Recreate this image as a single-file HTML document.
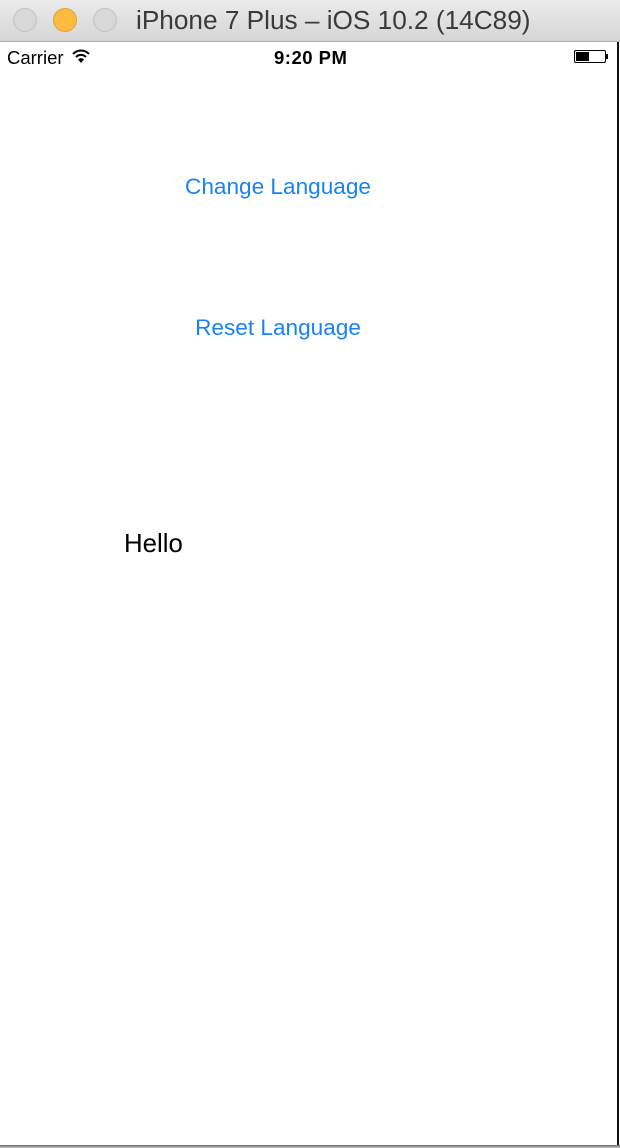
<!DOCTYPE html>
<html><head><style>
body{margin:0;width:620px;height:1148px;background:#fff;position:relative;overflow:hidden;font-family:"Liberation Sans",sans-serif}
.tb{position:absolute;left:0;top:0;width:620px;height:41px;background:linear-gradient(#ebebeb,#d6d6d6);border-bottom:1px solid #b0b0b0}
.dot{position:absolute;top:8px;width:24px;height:24px;border-radius:50%;background:#d8d8d8;border:1px solid #c2c2c2;box-sizing:border-box}
.title{position:absolute;left:136px;top:5px;font-size:26.2px;color:#3a3a3a}
.rb{position:absolute;right:1px;top:42px;width:2px;height:1104px;background:#111}
.bb{position:absolute;left:0;top:1145px;width:620px;height:3px;background:linear-gradient(#666,#ccc)}
.s{position:absolute;font-size:18.5px;color:#000}
.btn{position:absolute;font-size:22.6px;color:#1a82f7;width:556px;text-align:center;left:0}
</style></head><body>
<div class="tb">
<div class="dot" style="left:13px"></div>
<div class="dot" style="left:53px;background:#fdbc40;border-color:#dea236"></div>
<div class="dot" style="left:93px"></div>
<div class="title">iPhone 7 Plus – iOS 10.2 (14C89)</div>
</div>
<div class="s" style="left:7px;top:47px">Carrier</div>
<svg style="position:absolute;left:72px;top:49px" width="18" height="14" viewBox="0 0 18 14"><path d="M1 5a11 11 0 0 1 16 0M4 8a7 7 0 0 1 10 0" stroke="#000" stroke-width="2" fill="none"/><path d="M6 10.5a4 4 0 0 1 6 0L9 14z" fill="#000"/></svg>
<div class="s" style="left:274px;top:47px;font-weight:bold;letter-spacing:0.5px">9:20 PM</div>
<div style="position:absolute;left:574px;top:50px;width:32px;height:13px;border:1px solid #000;box-sizing:border-box;border-radius:2px"><div style="position:absolute;left:1px;top:1px;width:13px;height:9px;background:#000"></div></div>
<div style="position:absolute;left:606px;top:54px;width:2px;height:5px;background:#000"></div>
<div class="btn" style="top:174px">Change Language</div>
<div class="btn" style="top:315px">Reset Language</div>
<div style="position:absolute;left:124px;top:530px;font-size:25.8px;color:#000">Hello</div>
<div class="rb"></div>
<div class="bb"></div>
</body></html>
